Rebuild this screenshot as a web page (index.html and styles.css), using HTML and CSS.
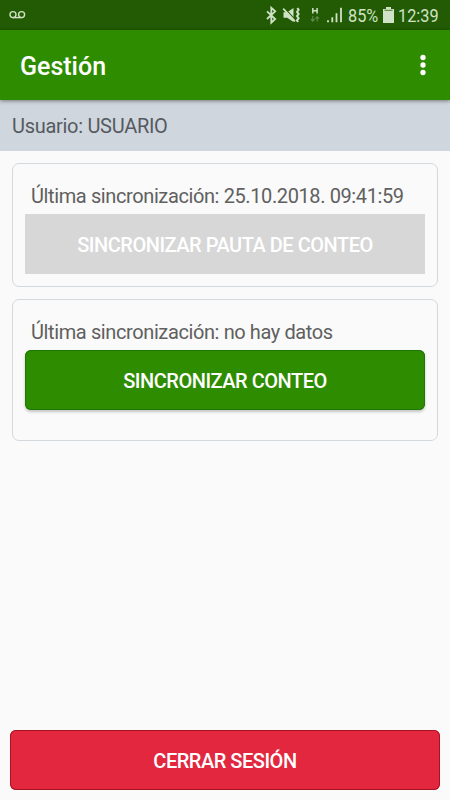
FILE: index.html
```html
<!DOCTYPE html>
<html lang="es">
<head>
<meta charset="utf-8">
<title>Gestión</title>
<link rel="stylesheet" href="styles.css">
</head>
<body>
<div class="status">
  <svg class="voicemail" width="17" height="10" viewBox="0 0 17 10" fill="none" stroke="currentColor" stroke-width="1.4"><circle cx="4" cy="4.6" r="3"/><circle cx="12.6" cy="4.6" r="3"/><path d="M4 7.6h8.6"/></svg>
  <svg class="icons" width="80" height="30" viewBox="265 0 80 30" fill="none" stroke="currentColor">
    <path d="M267 11.3l8.2 7.7-3.9 3.6V7.7l3.9 3.6-8.2 7.7" stroke-width="1.8"/>
    <path d="M283.5 12.3h3.7l6.3-4.3v14l-6.3-4.3h-3.7z" fill="currentColor" stroke="none"/>
    <path d="M284.4 8.2l11.5 12.2" stroke="#225b03" stroke-width="1.3"/>
    <path d="M283.2 8.7l11.8 12.6" stroke-width="1.8"/>
    <path d="M297.3 8l1.3 1.8-1.6 2.1 1.6 2.1-1.6 2.1 1.6 2.1-1.6 2.1 1 1.7" stroke-width="2"/>
    <path d="M312.8 8v5.6M317.1 8v5.6M312.8 10.8h4.3" stroke-width="1.5"/>
    <path d="M312.8 16v5M311 19.2l1.8 2 1.8-2M317.2 21.5V17M315.4 18.7l1.8-2 1.8 2" stroke="#668b50" stroke-width="1.1"/>
    <path d="M328 20.2v2M332.3 17.2v5M336.5 13.2v9M341 7.8v14.4" stroke-width="1.8"/>
  </svg>
  <span class="percent"><span>85%</span></span>
  <svg class="battery" width="11" height="16" viewBox="0 0 11 16"><path d="M3 0h5v2h3v14H0V2h3z" fill="currentColor"/><path d="M1.5 3.3h8" stroke="#4c7b33"/></svg>
  <span class="clock"><span>12:39</span></span>
</div>
<header class="appbar">
  <h1>Gestión</h1>
  <svg width="6" height="22" viewBox="0 0 6 22" fill="#fff"><circle cx="3" cy="3.5" r="2.65"/><circle cx="3" cy="11" r="2.65"/><circle cx="3" cy="18.5" r="2.65"/></svg>
</header>
<div class="user">Usuario: USUARIO</div>
<main>
  <section class="card">
    <p>Última sincronización: 25.10.2018. 09:41:59</p>
    <button class="btn disabled" disabled>SINCRONIZAR PAUTA DE CONTEO</button>
  </section>
  <section class="card tall">
    <p>Última sincronización: no hay datos</p>
    <button class="btn primary">SINCRONIZAR CONTEO</button>
  </section>
</main>
<footer><button class="btn danger">CERRAR SESIÓN</button></footer>
</body>
</html>
```
FILE: styles.css
```css
* { box-sizing: border-box; }
body {
  margin: 0;
  height: 800px;
  display: flex;
  flex-direction: column;
  background: #fafafa;
  color: #606060;
  font: 20px/24px Roboto, sans-serif;
  overflow: hidden;
}
.status {
  flex: none;
  height: 30px;
  display: flex;
  align-items: center;
  background: #225b03;
  color: #d0e2c7;
  font-size: 18.5px;
}
.voicemail { margin-left: 9px; }
.icons { margin-left: auto; }
.percent { width: 31px; margin: 2px 0 0 3px; }
.battery { margin: 0 4px 0 4px; }
.clock { width: 41px; margin: 2px 11px 0 0; }
.percent span, .clock span { display: inline-block; transform-origin: 0 50%; transform: scaleX(.88); }
.appbar {
  flex: none;
  height: 70px;
  padding: 3px 24px 0 20px;
  display: flex;
  align-items: center;
  justify-content: space-between;
  background: #2e8c00;
  color: #fff;
  box-shadow: 0 1px 4px rgba(0, 0, 0, .45);
  z-index: 1;
}
.appbar svg { margin-top: -3px; }
h1 { margin: 0; font-size: 25px; font-weight: 500; }
.user {
  flex: none;
  height: 51px;
  padding: 14px 12px 0;
  background: #d0d6de;
  color: #555a5f;
  letter-spacing: -.29px;
}
main {
  flex: 1;
  padding: 12px;
  display: flex;
  flex-direction: column;
  gap: 12px;
}
.card {
  height: 124px;
  padding: 20px 12px 0;
  border: 1px solid #d3d9dc;
  border-radius: 7px;
}
.card.tall { height: 142px; }
.card p { margin: 0 0 6px; padding-left: 6px; white-space: nowrap; letter-spacing: -.39px; }
.btn {
  display: block;
  width: 100%;
  height: 60px;
  padding: 2px 0 0;
  border: 0;
  border-radius: 6px;
  color: #fff;
  font: 500 20px Roboto, sans-serif;
  letter-spacing: -.48px;
}
.disabled { background: #d7d7d7; border-radius: 0; }
.primary { background: #2e8c00; box-shadow: inset 0 0 0 1px #207605, 0 2px 3px rgba(0, 0, 0, .22); }
.danger { background: #e2273f; box-shadow: inset 0 0 0 1px #a91220; }
footer { padding: 0 10px 10px; }
```
